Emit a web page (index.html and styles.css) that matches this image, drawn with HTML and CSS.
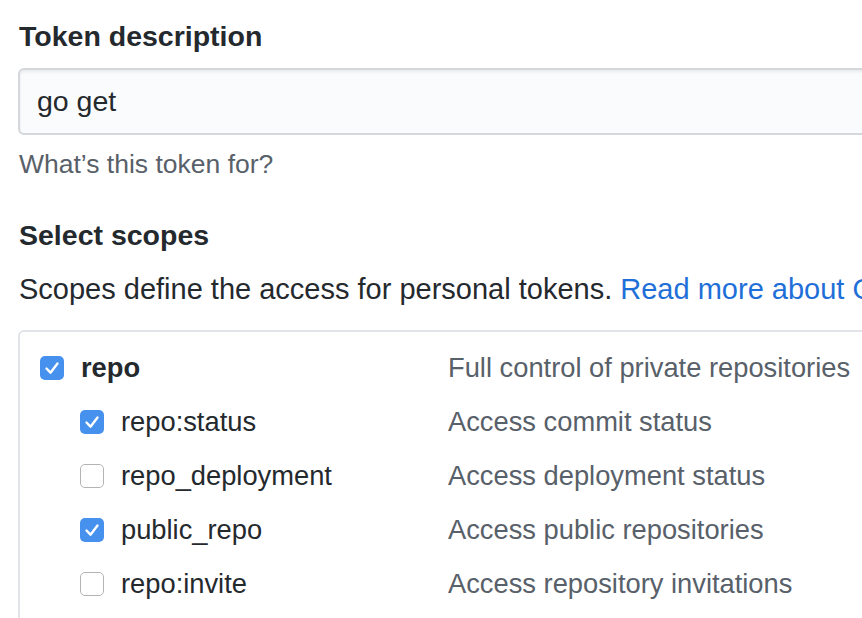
FILE: index.html
```html
<!DOCTYPE html>
<html>
<head>
<meta charset="utf-8">
<link rel="stylesheet" href="styles.css">
</head>
<body>
<div class="page">
  <div class="title">Token description</div>
  <div class="input">go get</div>
  <div class="note">What’s this token for?</div>
  <div class="title title-scopes">Select scopes</div>
  <div class="lead">Scopes define the access for personal tokens. <a class="link" href="#">Read more about OAuth scopes.</a></div>
  <div class="box">
    <div class="row">
      <div class="label"><span class="cb on"><svg viewBox="0 0 24 24"><path d="M6.5 12.5l4 4.2 7-9.2" fill="none" stroke="#fff" stroke-width="2.4" stroke-linecap="round" stroke-linejoin="round"/></svg></span><span class="name bold">repo</span></div>
      <div class="desc">Full control of private repositories</div>
    </div>
    <div class="row">
      <div class="label sub"><span class="cb on"><svg viewBox="0 0 24 24"><path d="M6.5 12.5l4 4.2 7-9.2" fill="none" stroke="#fff" stroke-width="2.4" stroke-linecap="round" stroke-linejoin="round"/></svg></span><span class="name">repo:status</span></div>
      <div class="desc">Access commit status</div>
    </div>
    <div class="row">
      <div class="label sub"><span class="cb"></span><span class="name">repo_deployment</span></div>
      <div class="desc">Access deployment status</div>
    </div>
    <div class="row">
      <div class="label sub"><span class="cb on"><svg viewBox="0 0 24 24"><path d="M6.5 12.5l4 4.2 7-9.2" fill="none" stroke="#fff" stroke-width="2.4" stroke-linecap="round" stroke-linejoin="round"/></svg></span><span class="name">public_repo</span></div>
      <div class="desc">Access public repositories</div>
    </div>
    <div class="row">
      <div class="label sub"><span class="cb"></span><span class="name">repo:invite</span></div>
      <div class="desc">Access repository invitations</div>
    </div>
  </div>
</div>
</body>
</html>
```

FILE: styles.css
```css
html, body {
  margin: 0;
  padding: 0;
  background: #fff;
  overflow: hidden;
}
body {
  width: 862px;
  height: 618px;
  font-family: "Liberation Sans", Arial, sans-serif;
  color: #24292e;
}
.page {
  padding: 16px 0 0 18px;
  width: 1100px;
}
.title {
  font-size: 28.5px;
  font-weight: bold;
  line-height: 40px;
  padding-left: 1px;
}
.title-scopes {
  margin-top: 33px;
}
.input {
  margin-top: 12px;
  height: 67px;
  box-sizing: border-box;
  border: 2px solid #d4d7db;
  border-radius: 6px;
  background: #fafbfc;
  box-shadow: inset 0 2px 3px rgba(27, 31, 35, 0.07);
  font-size: 28.5px;
  line-height: 63px;
  padding-left: 17px;
  width: 1000px;
}
.note {
  margin-top: 11px;
  font-size: 26.5px;
  line-height: 36px;
  color: #586069;
  padding-left: 1px;
}
.lead {
  margin-top: 14px;
  font-size: 29px;
  line-height: 40px;
  padding-left: 1px;
  white-space: nowrap;
}
.link {
  color: #1f6fd8;
  text-decoration: none;
}
.box {
  margin-top: 21px;
  border: 2px solid #e1e4e8;
  border-radius: 6px;
  padding: 9px 20px;
  width: 1000px;
  height: 400px;
}
.row {
  display: flex;
  align-items: center;
  height: 54px;
  font-size: 27.3px;
}
.label {
  width: 408px;
  box-sizing: border-box;
  display: flex;
  align-items: center;
  flex: none;
}
.label.sub {
  padding-left: 40px;
}
.cb {
  width: 24px;
  height: 24px;
  box-sizing: border-box;
  border-radius: 5px;
  border: 1.5px solid #b3b3b3;
  background: #fff;
  flex: none;
  display: flex;
  align-items: center;
  justify-content: center;
  margin-right: 17px;
}
.cb.on {
  border: none;
  background: #4690ee;
}
.cb svg {
  width: 24px;
  height: 24px;
}
.name.bold {
  font-weight: bold;
}
.desc {
  color: #586069;
  white-space: nowrap;
}
```
